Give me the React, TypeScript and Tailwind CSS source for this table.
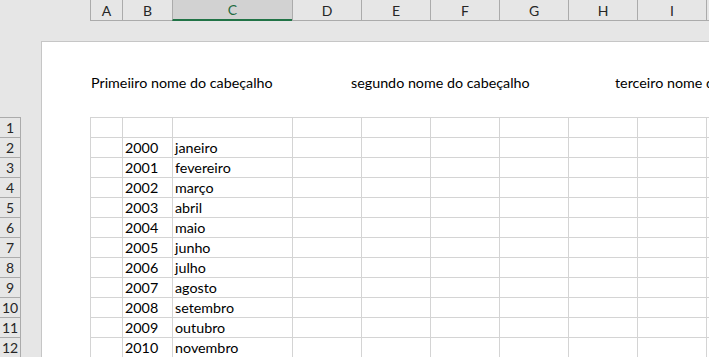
import React from 'react';

type Col = { key: string; width: string };

const columns: Col[] = [
  { key: 'A', width: 'w-[32px]' },
  { key: 'B', width: 'w-[50px]' },
  { key: 'C', width: 'w-[120px]' },
  { key: 'D', width: 'w-[69px]' },
  { key: 'E', width: 'w-[69px]' },
  { key: 'F', width: 'w-[69px]' },
  { key: 'G', width: 'w-[69px]' },
  { key: 'H', width: 'w-[69px]' },
  { key: 'I', width: 'w-[69px]' },
  { key: 'J', width: 'w-[69px]' },
];

const months = [
  'janeiro', 'fevereiro', 'março', 'abril', 'maio', 'junho',
  'julho', 'agosto', 'setembro', 'outubro', 'novembro',
];

// row 1 is blank, rows 2..12 hold year + month
const rows = [{ year: '', month: '' }, ...months.map((m, i) => ({ year: String(2000 + i), month: m }))];

const App: React.FC = () => {
  const selected = 'C';

  return (
    <div className="w-[709px] h-[357px] overflow-hidden bg-[#e6e6e6] text-black font-['Lato','Liberation_Sans',sans-serif]">
      {/* column headers */}
      <div className="flex h-[21px]">
        <div className="w-[90px] shrink-0" />
        {columns.map(col => (
          <div
            key={col.key}
            className={`${col.width} shrink-0 h-[21px] border-l border-b border-[#ababab] flex items-center justify-center text-[14px] ${
              col.key === selected
                ? 'bg-[#d2d2d2] text-[#1e6b41] border-b-2 border-b-[#217346]'
                : 'text-[#262626]'
            }`}
          >
            {col.key}
          </div>
        ))}
      </div>

      <div className="h-[20px]" />

      <div className="flex">
        {/* row headers */}
        <div className="w-[41px] shrink-0">
          <div className="h-[76px]" />
          {rows.map((_, i) => (
            <div
              key={i}
              className="w-[21px] h-[20px] border-t border-r border-[#ababab] flex items-center justify-center text-[14px] text-[#262626]"
            >
              {i + 1}
            </div>
          ))}
        </div>

        {/* page */}
        <div className="flex-1 bg-white border-t border-l border-[#c6c6c6]">
          <div className="h-[75px] pt-[31px] pl-[49px] flex text-[14.3px] leading-[20px] whitespace-nowrap">
            <span className="w-[260px] shrink-0">Primeiiro nome do cabeçalho</span>
            <span className="w-[264px] shrink-0">segundo nome do cabeçalho</span>
            <span className="shrink-0">terceiro nome do cabeçalho</span>
          </div>

          <div className="ml-[48px]">
            {rows.map((row, i) => (
              <div key={i} className="flex h-[20px] border-t border-[#d4d4d4]">
                {columns.map(col => (
                  <div
                    key={col.key}
                    className={`${col.width} shrink-0 border-l border-[#d4d4d4] pl-[2px] text-[14.3px] leading-[19px] whitespace-nowrap`}
                  >
                    {col.key === 'B' ? row.year : col.key === 'C' ? row.month : ''}
                  </div>
                ))}
              </div>
            ))}
          </div>
        </div>
      </div>
    </div>
  );
};

export default App;
